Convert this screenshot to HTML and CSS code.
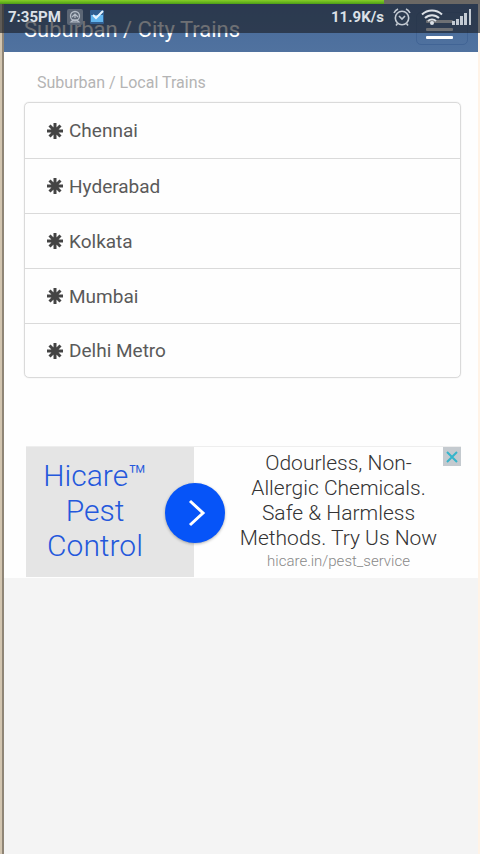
FILE: index.html
```html
<!DOCTYPE html>
<html lang="en">
<head>
<meta charset="utf-8">
<meta name="viewport" content="width=device-width, initial-scale=1">
<title>Suburban / City Trains</title>
<link rel="stylesheet" href="styles.css">
</head>
<body>
<div class="status">
  <div class="progress"><div class="progress-fill"></div></div>
  <div class="status-row">
    <span class="clock">7:35PM</span>
    <svg class="notice" viewBox="0 0 16 16" aria-hidden="true"><rect width="16" height="16" rx="2" fill="#5c6675"/><circle cx="8" cy="7" r="4.5" fill="none" stroke="#b5bdc8" stroke-width="1.3"/><path d="M5 8l3-3 3 3M8 6v3M4 13l2-2h4l2 2z" fill="none" stroke="#b5bdc8" stroke-width="1.2"/></svg>
    <svg class="notice" viewBox="0 0 16 16" aria-hidden="true"><rect x="1" y="1" width="14" height="14" rx="1" fill="#315f91"/><path d="M2 6h12v7H2z" fill="#62b5ee"/><path d="M4 6l3 3 7-7" fill="none" stroke="#e8f5ff" stroke-width="2"/></svg>
    <span class="speed">11.9K/s</span>
    <svg class="alarm" viewBox="0 0 20 20" fill="none" stroke="#c3cad3" stroke-width="1.6" aria-hidden="true"><circle cx="10" cy="11" r="6.7"/><path d="M2 6a8 8 0 0 1 4-4M18 6a8 8 0 0 0-4-4M5.500 16.500l-1.500 2M14.500 16.500l1.500 2M7 9l3 3 3-3"/></svg>
    <svg class="wifi" viewBox="0 0 22 18" fill="none" stroke="#dce1e7" stroke-width="2" aria-hidden="true"><path d="M1 6.500a14.500 14.500 0 0 1 20 0M4 10a10 10 0 0 1 14 0M7 13a6 6 0 0 1 8 0"/><circle cx="11" cy="15" r="2" fill="#dce1e7" stroke="none"/></svg>
    <svg class="signal" viewBox="0 0 20 16" fill="#c3cad3" aria-hidden="true"><path d="M0 12h3v4H0zM4 10h3v6H4zM8 7h3v9H8zM12 4h3v12h-3zM17 0h2v16h-2z"/></svg>
  </div>
</div>
<div class="page">
  <header class="navbar">
    <h1 class="title">Suburban / City Trains</h1>
    <button class="menu" type="button" aria-label="Menu"><span class="bar"></span><span class="bar"></span><span class="bar"></span></button>
  </header>
  <main class="content">
    <h2 class="subtitle">Suburban / Local Trains</h2>
    <nav class="cities">
      <a class="city" href="#"><svg class="star" viewBox="0 0 16 16" aria-hidden="true"><path d="M8 0v16M0 8h16M2.500 2.500l11 11M13.500 2.500l-11 11"/></svg>Chennai</a>
      <a class="city" href="#"><svg class="star" viewBox="0 0 16 16" aria-hidden="true"><path d="M8 0v16M0 8h16M2.500 2.500l11 11M13.500 2.500l-11 11"/></svg>Hyderabad</a>
      <a class="city" href="#"><svg class="star" viewBox="0 0 16 16" aria-hidden="true"><path d="M8 0v16M0 8h16M2.500 2.500l11 11M13.500 2.500l-11 11"/></svg>Kolkata</a>
      <a class="city" href="#"><svg class="star" viewBox="0 0 16 16" aria-hidden="true"><path d="M8 0v16M0 8h16M2.500 2.500l11 11M13.500 2.500l-11 11"/></svg>Mumbai</a>
      <a class="city" href="#"><svg class="star" viewBox="0 0 16 16" aria-hidden="true"><path d="M8 0v16M0 8h16M2.500 2.500l11 11M13.500 2.500l-11 11"/></svg>Delhi Metro</a>
    </nav>
    <aside class="ad">
      <a class="ad-brand" href="#">Hicare™<br>Pest<br>Control</a>
      <div class="ad-copy">
        <p class="ad-text">Odourless, Non-<br>Allergic Chemicals.<br>Safe &amp; Harmless<br>Methods. Try Us Now</p>
        <a class="ad-link" href="#">hicare.in/pest_service</a>
      </div>
      <button class="ad-go" type="button" aria-label="Open"><svg viewBox="0 0 60 60" aria-hidden="true"><path d="M25 18l13 12-13 12" fill="none" stroke="#fff" stroke-width="3"/></svg></button>
      <button class="ad-close" type="button" aria-label="Close ad"><svg viewBox="0 0 18 20" aria-hidden="true"><path d="M4 5l10 10M14 5L4 15" fill="none" stroke="#35b5cb" stroke-width="2"/></svg></button>
    </aside>
  </main>
</div>
</body>
</html>
```
FILE: styles.css
```css
* { box-sizing: border-box; }

body {
  margin: 0;
  background: #f4f4f4;
  color: #5a5a5a;
  font-family: Roboto, "Liberation Sans", sans-serif;
}

a { color: inherit; text-decoration: none; }
button { padding: 0; border: 0; cursor: pointer; }
svg { display: block; }

.status {
  position: absolute;
  z-index: 2;
  top: 0;
  left: 0;
  right: 0;
  height: 33px;
  background: rgba(28, 32, 38, 0.64);
}

.progress { height: 4px; background: #6b6864; }
.progress-fill { width: 80%; height: 4px; background: linear-gradient(#86cf28, #4d9e16); }

.status-row {
  display: flex;
  align-items: center;
  height: 26px;
  padding: 0 8px;
  color: #dce1e7;
  font-size: 15px;
  font-weight: 700;
}

.notice { width: 16px; height: 16px; margin-left: 6px; }
.speed { margin-left: auto; }
.alarm { width: 20px; height: 20px; margin-left: 8px; }
.wifi { width: 22px; height: 18px; margin-left: 9px; }
.signal { width: 20px; height: 16px; margin-left: 9px; }

.page {
  min-height: 100vh;
  padding: 0 2px 0 4px;
  background:
    linear-gradient(90deg, #d2c5b0 2px, #8f8576 2px) left / 4px 100% no-repeat,
    linear-gradient(#fff3e7, #fff3e7) right / 2px 100% no-repeat;
}

.navbar {
  display: flex;
  justify-content: space-between;
  height: 52px;
  padding: 12px 10px 0 20px;
  background: linear-gradient(#46699a, #50729f);
}

.title {
  margin: 0;
  color: #fff;
  font-size: 22px;
  font-weight: 400;
  line-height: 36px;
}

.menu {
  display: flex;
  flex-direction: column;
  gap: 5px;
  width: 52px;
  height: 33px;
  padding: 7px 0 0 9px;
  border: 1px solid #416495;
  border-radius: 5px;
  background: transparent;
}

.bar { width: 27px; height: 3px; border-radius: 1px; background: #fff; }

.content { padding: 21px 17px 1px 20px; background: #fefefe; }

.subtitle {
  margin: 0 0 9px;
  padding-left: 13px;
  color: #b4b4b4;
  font-size: 16px;
  font-weight: 400;
  line-height: 20px;
}

.cities {
  border: 1px solid #dadada;
  border-radius: 5px;
  box-shadow: 0 0 1px #ccc;
}

.city {
  display: flex;
  align-items: center;
  gap: 6px;
  height: 55px;
  padding-left: 22px;
  font-size: 19px;
}

.city + .city { border-top: 1px solid #dadada; }
.city:last-child { height: 54px; }
.star { width: 16px; height: 16px; fill: none; stroke: #444; stroke-width: 3; }

.ad {
  position: relative;
  display: grid;
  grid-template-columns: 168px 1fr;
  height: 131px;
  margin: 68px 0 0 2px;
  border-top: 1px solid #eee;
}

.ad-brand {
  padding: 11px 30px 0 0;
  background: #e5e5e5;
  color: #2458dc;
  font-size: 30px;
  font-weight: 300;
  line-height: 35px;
  text-align: center;
}

.ad-copy { padding: 4px 0 0 22px; text-align: center; }

.ad-text {
  margin: 0;
  color: #333;
  font-size: 21px;
  font-weight: 300;
  line-height: 25px;
}

.ad-link { color: #888; font-size: 15px; font-weight: 300; line-height: 20px; }

.ad-go {
  position: absolute;
  top: 36px;
  left: 139px;
  width: 60px;
  height: 60px;
  border-radius: 50%;
  background: #0654f8;
  box-shadow: 0 1px 3px rgba(0, 0, 0, 0.3);
}

.ad-close {
  position: absolute;
  top: 0;
  right: 0;
  width: 18px;
  height: 19px;
  background: #c4cacf;
}
```
